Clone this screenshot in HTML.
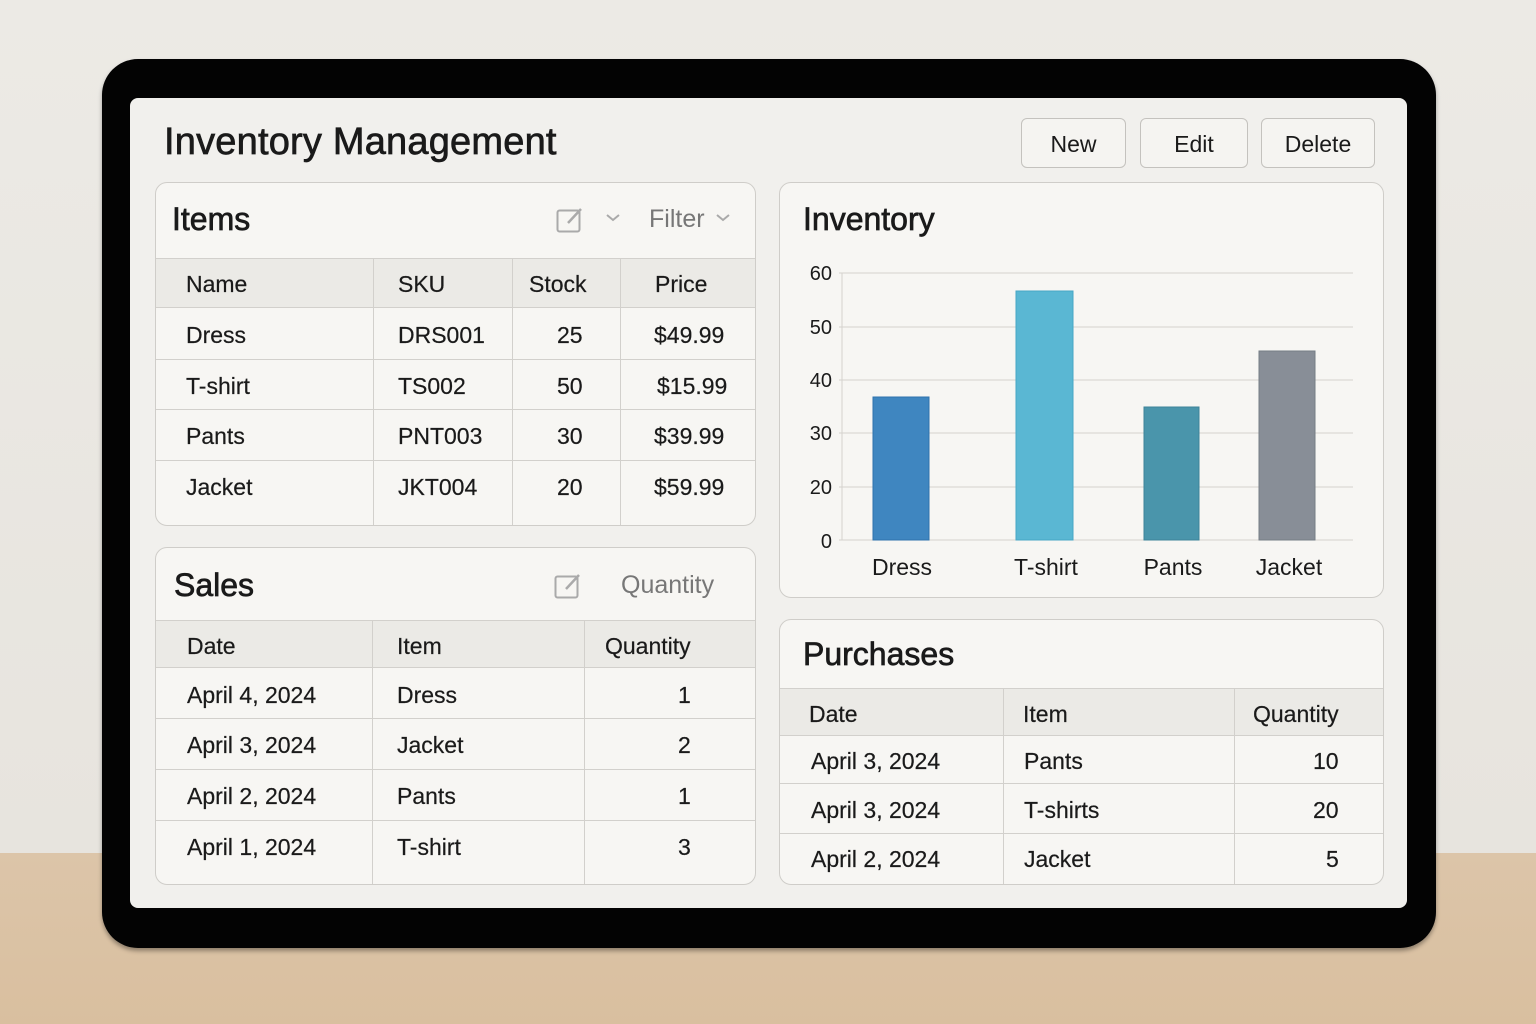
<!DOCTYPE html>
<html><head><style>
*{margin:0;padding:0;box-sizing:border-box}
body{width:1536px;height:1024px;overflow:hidden;position:relative;font-family:"Liberation Sans","DejaVu Sans",sans-serif;color:#1a1a1a;background:linear-gradient(#eceae5 0,#e7e4de 853px,#dcc5a9 853px,#d9bf9f 1024px)}
.a{position:absolute}
.bezel{left:102px;top:59px;width:1334px;height:889px;background:#030303;border-radius:36px;box-shadow:0 3px 4px rgba(0,0,0,.35)}
.screen{left:130px;top:98px;width:1277px;height:810px;background:#f1f0ed;border-radius:8px}
.panel{background:#f7f6f3;border:1px solid #cfcdc9;border-radius:12px;overflow:hidden}
.t{position:absolute;white-space:nowrap}
.h{-webkit-text-stroke:0.7px #1a1a1a}
.btn{position:absolute;top:118px;height:50px;border:1px solid #c4c2be;border-radius:6px;background:#f5f4f1;font-size:23px;text-align:center;line-height:50px}
.hl{position:absolute;height:1px;background:#d2d0cc}
.vl{position:absolute;width:1px;background:#d2d0cc}
.hd{position:absolute;background:#ebeae6}
.c{font-size:23px;margin-top:1px;-webkit-text-stroke:0.2px #1a1a1a}
</style></head><body>
<div class="a bezel"></div>
<div class="a screen"></div>
<div class="t h" style="left:164px;top:121px;font-size:38px;letter-spacing:0.2px">Inventory Management</div>
<div class="btn" style="left:1021px;width:105px">New</div>
<div class="btn" style="left:1140px;width:108px">Edit</div>
<div class="btn" style="left:1261px;width:114px">Delete</div>

<!-- Items -->
<div class="a panel" style="left:155px;top:182px;width:601px;height:344px"></div>
<div class="hd" style="left:156px;top:258px;width:599px;height:49px"></div>
<div class="t h" style="left:172px;top:201px;font-size:32px">Items</div>
<svg class="a" style="left:556px;top:206px" width="30" height="28"><rect x="1.5" y="4.5" width="22" height="21" rx="2" fill="none" stroke="#aaa" stroke-width="2"/><path d="M12 17 L25 3" stroke="#aaa" stroke-width="2.5"/></svg>
<svg class="a" style="left:605px;top:213px" width="16" height="10"><path d="M2 2 L8 7 L14 2" fill="none" stroke="#aaa" stroke-width="2"/></svg>
<div class="t" style="left:649px;top:205px;font-size:25px;color:#777">Filter</div>
<svg class="a" style="left:715px;top:213px" width="16" height="10"><path d="M2 2 L8 7 L14 2" fill="none" stroke="#aaa" stroke-width="2"/></svg>
<div class="hl" style="left:156px;top:258px;width:599px"></div>
<div class="hl" style="left:156px;top:307px;width:599px"></div>
<div class="hl" style="left:156px;top:359px;width:599px"></div>
<div class="hl" style="left:156px;top:409px;width:599px"></div>
<div class="hl" style="left:156px;top:460px;width:599px"></div>
<div class="vl" style="left:373px;top:258px;height:267px"></div>
<div class="vl" style="left:512px;top:258px;height:267px"></div>
<div class="vl" style="left:620px;top:258px;height:267px"></div>
<div class="t c" style="left:186px;top:270px">Name</div><div class="t c" style="left:398px;top:270px">SKU</div><div class="t c" style="left:529px;top:270px">Stock</div><div class="t c" style="left:655px;top:270px">Price</div>
<div class="t c" style="left:186px;top:321px">Dress</div><div class="t c" style="left:398px;top:321px">DRS001</div><div class="t c" style="left:557px;top:321px">25</div><div class="t c" style="left:654px;top:321px">$49.99</div>
<div class="t c" style="left:186px;top:372px">T-shirt</div><div class="t c" style="left:398px;top:372px">TS002</div><div class="t c" style="left:557px;top:372px">50</div><div class="t c" style="left:657px;top:372px">$15.99</div>
<div class="t c" style="left:186px;top:422px">Pants</div><div class="t c" style="left:398px;top:422px">PNT003</div><div class="t c" style="left:557px;top:422px">30</div><div class="t c" style="left:654px;top:422px">$39.99</div>
<div class="t c" style="left:186px;top:473px">Jacket</div><div class="t c" style="left:398px;top:473px">JKT004</div><div class="t c" style="left:557px;top:473px">20</div><div class="t c" style="left:654px;top:473px">$59.99</div>

<!-- Sales -->
<div class="a panel" style="left:155px;top:547px;width:601px;height:338px"></div>
<div class="hd" style="left:156px;top:620px;width:599px;height:47px"></div>
<div class="t h" style="left:174px;top:567px;font-size:32px">Sales</div>
<svg class="a" style="left:554px;top:572px" width="30" height="28"><rect x="1.5" y="4.5" width="22" height="21" rx="2" fill="none" stroke="#aaa" stroke-width="2"/><path d="M12 17 L25 3" stroke="#aaa" stroke-width="2.5"/></svg>
<div class="t" style="left:621px;top:571px;font-size:25px;color:#777">Quantity</div>
<div class="hl" style="left:156px;top:620px;width:599px"></div>
<div class="hl" style="left:156px;top:667px;width:599px"></div>
<div class="hl" style="left:156px;top:718px;width:599px"></div>
<div class="hl" style="left:156px;top:769px;width:599px"></div>
<div class="hl" style="left:156px;top:820px;width:599px"></div>
<div class="vl" style="left:372px;top:620px;height:264px"></div>
<div class="vl" style="left:584px;top:620px;height:264px"></div>
<div class="t c" style="left:187px;top:632px">Date</div><div class="t c" style="left:397px;top:632px">Item</div><div class="t c" style="left:605px;top:632px">Quantity</div>
<div class="t c" style="left:187px;top:681px">April 4, 2024</div><div class="t c" style="left:397px;top:681px">Dress</div><div class="t c" style="left:678px;top:681px">1</div>
<div class="t c" style="left:187px;top:731px">April 3, 2024</div><div class="t c" style="left:397px;top:731px">Jacket</div><div class="t c" style="left:678px;top:731px">2</div>
<div class="t c" style="left:187px;top:782px">April 2, 2024</div><div class="t c" style="left:397px;top:782px">Pants</div><div class="t c" style="left:678px;top:782px">1</div>
<div class="t c" style="left:187px;top:833px">April 1, 2024</div><div class="t c" style="left:397px;top:833px">T-shirt</div><div class="t c" style="left:678px;top:833px">3</div>

<!-- Inventory chart -->
<div class="a panel" style="left:779px;top:182px;width:605px;height:416px"></div>
<div class="t h" style="left:803px;top:201px;font-size:32px">Inventory</div>
<svg class="a" style="left:779px;top:182px" width="605" height="416" font-family="Liberation Sans, sans-serif" font-size="20" fill="#1a1a1a">
<g stroke="#d4d2ce" stroke-width="1">
<line x1="60" y1="91" x2="574" y2="91"/><line x1="60" y1="145" x2="574" y2="145"/><line x1="60" y1="198" x2="574" y2="198"/><line x1="60" y1="251" x2="574" y2="251"/><line x1="60" y1="305" x2="574" y2="305"/><line x1="60" y1="358" x2="574" y2="358"/><line x1="63" y1="91" x2="63" y2="358"/></g>
<text x="53" y="98" text-anchor="end">60</text><text x="53" y="152" text-anchor="end">50</text><text x="53" y="205" text-anchor="end">40</text><text x="53" y="258" text-anchor="end">30</text><text x="53" y="312" text-anchor="end">20</text><text x="53" y="366" text-anchor="end">0</text>
<rect x="94" y="215" width="56" height="143" fill="#3f86c0" stroke="#2f73ad"/>
<rect x="237" y="109" width="57" height="249" fill="#5ab7d3" stroke="#47a7c6"/>
<rect x="365" y="225" width="55" height="133" fill="#4a95ab" stroke="#3d8499"/>
<rect x="480" y="169" width="56" height="189" fill="#888e97" stroke="#767d86"/>
<g font-size="23" text-anchor="middle"><text x="123" y="393">Dress</text><text x="267" y="393">T-shirt</text><text x="394" y="393">Pants</text><text x="510" y="393">Jacket</text></g>
</svg>

<!-- Purchases -->
<div class="a panel" style="left:779px;top:619px;width:605px;height:266px"></div>
<div class="hd" style="left:780px;top:688px;width:603px;height:47px"></div>
<div class="t h" style="left:803px;top:636px;font-size:32px">Purchases</div>
<div class="hl" style="left:780px;top:688px;width:603px"></div>
<div class="hl" style="left:780px;top:735px;width:603px"></div>
<div class="hl" style="left:780px;top:783px;width:603px"></div>
<div class="hl" style="left:780px;top:833px;width:603px"></div>
<div class="vl" style="left:1003px;top:688px;height:196px"></div>
<div class="vl" style="left:1234px;top:688px;height:196px"></div>
<div class="t c" style="left:809px;top:700px">Date</div><div class="t c" style="left:1023px;top:700px">Item</div><div class="t c" style="left:1253px;top:700px">Quantity</div>
<div class="t c" style="left:811px;top:747px">April 3, 2024</div><div class="t c" style="left:1024px;top:747px">Pants</div><div class="t c" style="left:1313px;top:747px">10</div>
<div class="t c" style="left:811px;top:796px">April 3, 2024</div><div class="t c" style="left:1024px;top:796px">T-shirts</div><div class="t c" style="left:1313px;top:796px">20</div>
<div class="t c" style="left:811px;top:845px">April 2, 2024</div><div class="t c" style="left:1024px;top:845px">Jacket</div><div class="t c" style="left:1326px;top:845px">5</div>
</body></html>
